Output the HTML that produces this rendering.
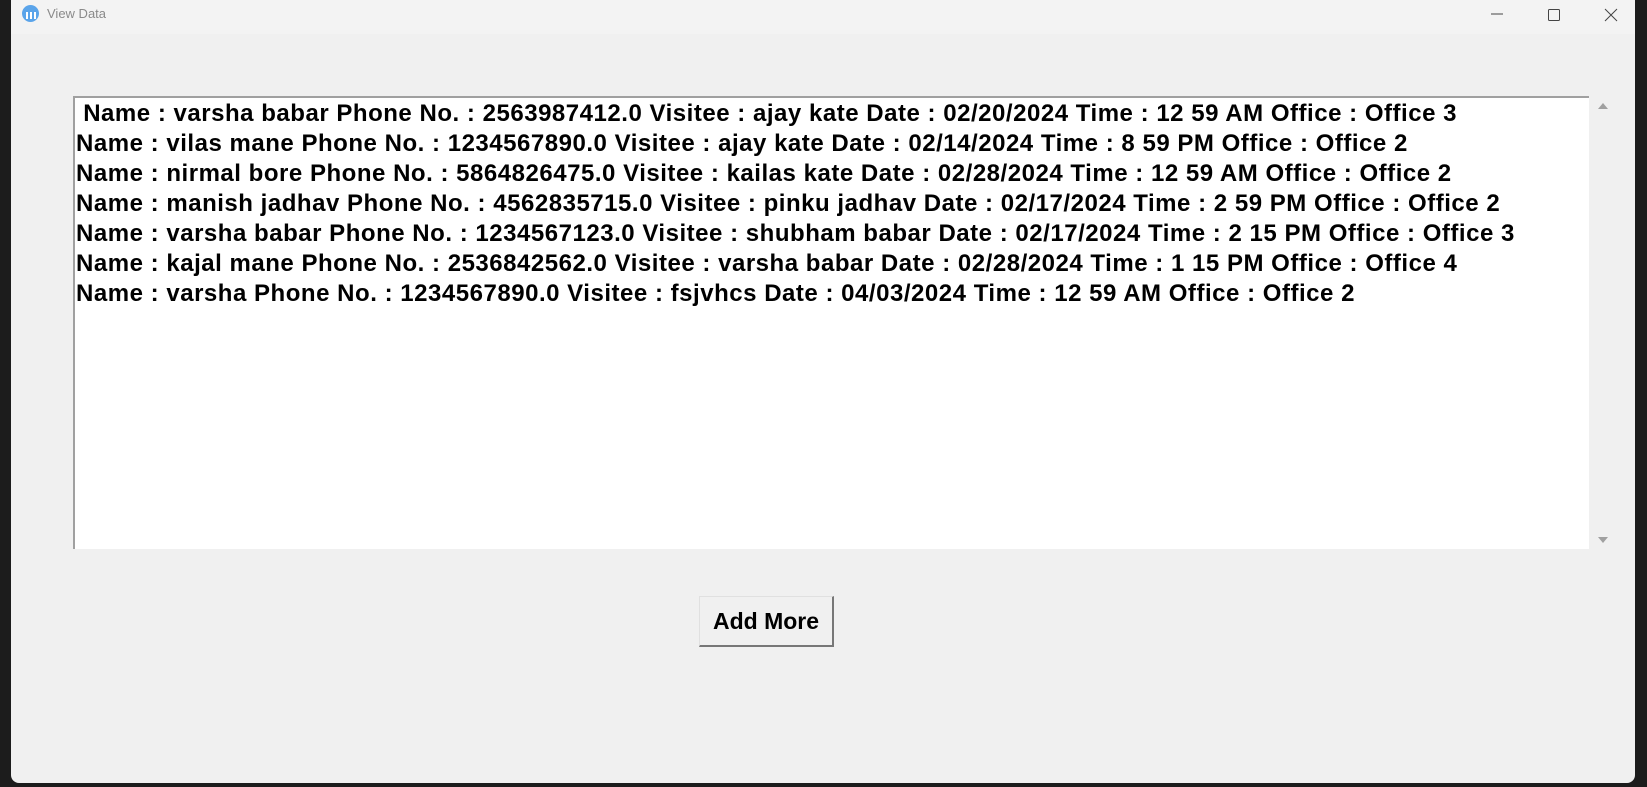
<!DOCTYPE html>
<html><head><meta charset="utf-8"><style>
body{margin:0;width:1647px;height:787px;background:#1c1c1c;position:relative;overflow:hidden;font-family:"Liberation Sans",sans-serif}
.win{position:absolute;left:11px;top:0;width:1624px;height:783px;background:#f0f0f0;border-radius:0 0 8px 8px}
.title{position:absolute;left:0;top:0;width:100%;height:34px;background:#f3f3f3;font-family:"Liberation Sans",sans-serif;font-size:13px;color:#8a8a8a}
.title span{position:absolute;left:36px;top:6px}
.ico{position:absolute;left:11px;top:5px;width:17px;height:17px;border-radius:50%;background:#5aa4ea}
.ico i{position:absolute;bottom:3px;width:2px;height:7px;background:#fff}
.tb{position:absolute;left:62px;top:96px;width:1516px;height:453px;background:#fff;border-top:2px solid #a0a0a0;border-left:2px solid #a0a0a0;box-sizing:border-box}
.tb div{font-weight:bold;font-size:24px;letter-spacing:0.52px;line-height:30px;white-space:pre;color:#000;padding-left:1px;padding-top:1px}
.btn{position:absolute;left:688px;top:596px;width:135px;height:51px;box-sizing:border-box;background:#f0f0f0;border:1px solid #e0e0e0;border-right:2px solid #777;border-bottom:2px solid #777;font-weight:bold;font-size:23px;text-align:center;line-height:48px}
</style></head><body>
<div class="win">
<div class="title"><div class="ico"><i style="left:4px"></i><i style="left:8px"></i><i style="left:12px"></i></div><span>View Data</span>
<svg style="position:absolute;left:1478px;top:9px" width="16" height="16"><line x1="2" y1="5" x2="14" y2="5" stroke="#444"/></svg>
<svg style="position:absolute;left:1535px;top:7px" width="16" height="16"><rect x="2.5" y="2.5" width="11" height="11" fill="none" stroke="#444" rx="1"/></svg>
<svg style="position:absolute;left:1592px;top:7px" width="16" height="16"><path d="M2 2L14 14M14 2L2 14" stroke="#444"/></svg>
</div>
<div class="tb">
<div> Name : varsha babar Phone No. : 2563987412.0 Visitee : ajay kate Date : 02/20/2024 Time : 12 59 AM Office : Office 3
Name : vilas mane Phone No. : 1234567890.0 Visitee : ajay kate Date : 02/14/2024 Time : 8 59 PM Office : Office 2
Name : nirmal bore Phone No. : 5864826475.0 Visitee : kailas kate Date : 02/28/2024 Time : 12 59 AM Office : Office 2
Name : manish jadhav Phone No. : 4562835715.0 Visitee : pinku jadhav Date : 02/17/2024 Time : 2 59 PM Office : Office 2
Name : varsha babar Phone No. : 1234567123.0 Visitee : shubham babar Date : 02/17/2024 Time : 2 15 PM Office : Office 3
Name : kajal mane Phone No. : 2536842562.0 Visitee : varsha babar Date : 02/28/2024 Time : 1 15 PM Office : Office 4
Name : varsha Phone No. : 1234567890.0 Visitee : fsjvhcs Date : 04/03/2024 Time : 12 59 AM Office : Office 2</div>
</div>
<svg style="position:absolute;left:1586px;top:101px" width="12" height="10"><path d="M1 8L6 2L11 8Z" fill="#a0a0a0"/></svg>
<svg style="position:absolute;left:1586px;top:535px" width="12" height="10"><path d="M1 2L6 8L11 2Z" fill="#a0a0a0"/></svg>
<div class="btn">Add More</div>
</div>
</body></html>
